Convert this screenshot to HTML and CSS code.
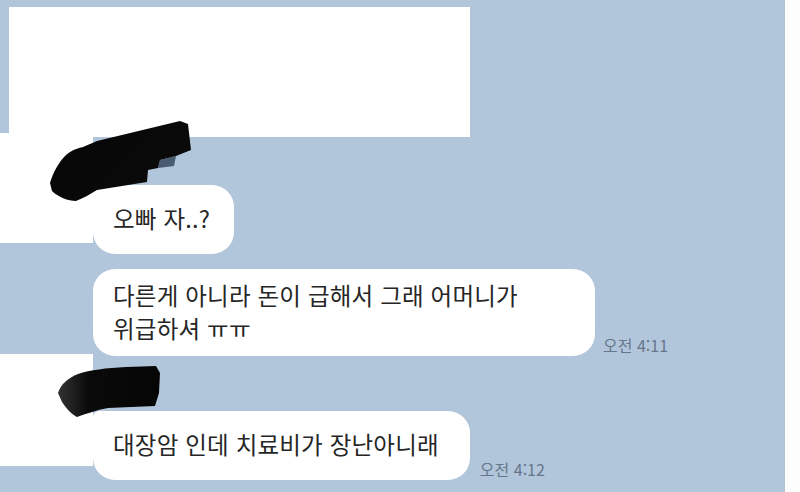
FILE: index.html
```html
<!DOCTYPE html>
<html lang="ko">
<head>
<meta charset="utf-8">
<title>채팅</title>
<link rel="stylesheet" href="styles.css">
</head>
<body>
<div class="page">
  <div class="chat">
    <div class="redact-top"></div>

    <div class="row row-first">
      <div class="mask mask-1"></div>
      <div class="msgcol pad-1">
        <div class="bubble single tail b1">오빠 자..?</div>
      </div>
      <svg class="scribble scribble-1" width="160" height="100" viewBox="0 0 160 100">
        <defs>
          <linearGradient id="g1" x1="0" y1="0" x2="1" y2="0.6">
            <stop offset="0" stop-color="#333333"/>
            <stop offset="0.3" stop-color="#070707"/>
            <stop offset="1" stop-color="#0b0b0b"/>
          </linearGradient>
        </defs>
        <path d="M4 64 C7 54 12 44 20 36 C26 31 32 29 37 28 L51 22 L134 2 L142 5 L145 31 L130 37 L114 41 L112 49 L102 51 L101 63 L51 71 C44 75 38 79 30 82 C22 82 12 78 6 72 Z" fill="url(#g1)"/>
        <path d="M114 41 L130 37 L128 47 L112 49 Z" fill="#26374a" opacity="0.75"/>
      </svg>
    </div>

    <div class="row row-second">
      <div class="msgcol pad-2">
        <div class="bubble multi">다른게 아니라 돈이 급해서 그래 어머니가 위급하셔 ㅠㅠ</div>
        <span class="time">오전 4:11</span>
      </div>
    </div>

    <div class="row row-third">
      <div class="mask mask-3"></div>
      <div class="msgcol pad-3">
        <div class="bubble single tail b3">대장암 인데 치료비가 장난아니래</div>
        <span class="time time-3">오전 4:12</span>
      </div>
      <svg class="scribble scribble-2" width="110" height="60" viewBox="0 0 110 60">
        <defs>
          <linearGradient id="g2" x1="0" y1="0" x2="1" y2="0">
            <stop offset="0" stop-color="#333333"/>
            <stop offset="0.3" stop-color="#0a0a0a"/>
            <stop offset="1" stop-color="#050505"/>
          </linearGradient>
        </defs>
        <path d="M2 30 C5 21 12 15 22 11 C34 7 50 5 70 4 L100 3 L104 10 L103 30 L99 43 L52 45 C40 47 30 51 21 54 C15 51 10 45 6 39 Z" fill="url(#g2)"/>
      </svg>
    </div>
  </div>
  <div class="edge"></div>
</div>
</body>
</html>
```

FILE: styles.css
```css
* { box-sizing: border-box; }

html, body {
  margin: 0;
  padding: 0;
  background: #ffffff;
}

body {
  font-family: "Noto Sans CJK KR", "Noto Sans", sans-serif;
  color: #262626;
}

.page {
  width: 800px;
  height: 492px;
  display: flex;
  overflow: hidden;
}

.chat {
  flex: 1;
  background: #b2c6db;
  position: relative;
}

.edge {
  width: 16px;
  flex: none;
  background: #fdfdfd;
  box-shadow: inset 1px 0 0 #b7c2cf;
}

.redact-top {
  margin: 7px 0 0 9px;
  width: 461px;
  height: 130px;
  background: #ffffff;
}

.row {
  display: flex;
  align-items: flex-start;
  position: relative;
}

.row-first { margin-top: -4px; }
.row-second { margin-top: 15px; }
.row-third { margin-top: -2px; }

.mask {
  width: 93px;
  flex: none;
  background: #ffffff;
}

.mask-1 { height: 110px; }
.mask-3 { height: 112px; }

.msgcol {
  display: flex;
  align-items: flex-end;
}

.pad-1 { padding-top: 52px; }
.pad-2 { padding-left: 93px; }
.pad-3 { padding-top: 57px; }

.bubble {
  background: #ffffff;
  border-radius: 22px;
  font-size: 23.5px;
  letter-spacing: 0.2px;
  line-height: 33px;
  word-break: keep-all;
  max-width: 502px;
}

.bubble.single {
  padding: 17px 26px 19px 20px;
}

.bubble.b1 { padding-right: 24px; }
.bubble.b3 { padding-right: 31px; }

.bubble.multi {
  padding: 10px 20px 11px 20px;
}

.bubble.tail {
  border-top-left-radius: 6px;
}

.time {
  font-size: 16px;
  line-height: 19px;
  color: #66768a;
  margin-left: 8px;
  margin-bottom: 1px;
  white-space: nowrap;
}

.time-3 { margin-left: 10px; }

.scribble {
  position: absolute;
}

.scribble-1 {
  left: 46px;
  top: -14px;
}

.scribble-2 {
  left: 56px;
  top: 9px;
}
```
